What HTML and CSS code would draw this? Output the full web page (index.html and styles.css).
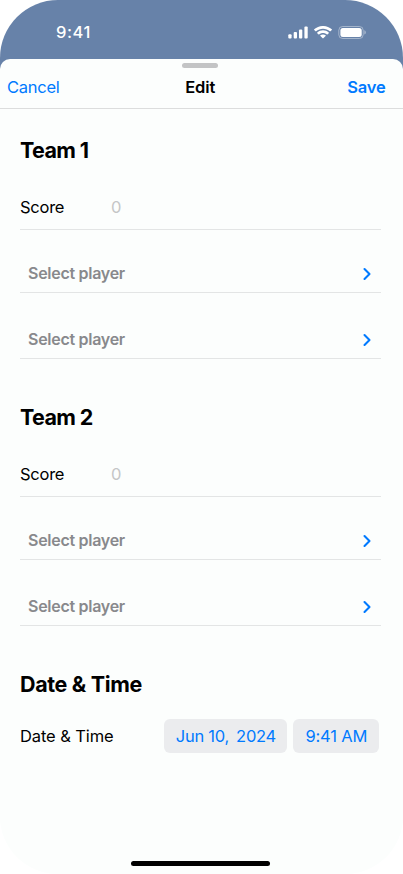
FILE: index.html
```html
<!DOCTYPE html>
<html lang="en">
<head>
<meta charset="utf-8">
<title>Edit</title>
<link rel="stylesheet" href="styles.css">
</head>
<body>
<div class="screen">
  <div class="status">
    <span class="clock">9:41</span>
    <div class="status-icons">
      <svg width="20" height="13" viewBox="0 0 20 13" fill="#fff"><rect x="0.300" y="8.2" width="3.3" height="4.4" rx="1"/><rect x="5.700" y="6" width="3.3" height="6.6" rx="1"/><rect x="11" y="3.4" width="3.3" height="9.2" rx="1"/><rect x="16.400" y="0.5" width="3.3" height="12.1" rx="1"/></svg>
      <svg width="18" height="13" viewBox="0 0 17.2 12.4" fill="#fff"><path d="M8.6 2.5c2.5 0 4.8.9 6.6 2.6.1.1.4.1.5 0l1.3-1.3c.2-.2.2-.4 0-.6C12.300-1.100 4.900-1.100.2 3.200c-.2.2-.2.4 0 .6l1.300 1.300c.1.1.4.1.5 0 1.800-1.700 4.100-2.600 6.600-2.600zM8.600 6.700c1.400 0 2.700.5 3.700 1.400.2.1.4.1.5 0l1.300-1.300c.2-.2.2-.4 0-.6-3.100-2.900-7.900-2.900-11 0-.2.2-.2.4 0 .6l1.300 1.300c.1.1.3.1.5 0 1-.9 2.300-1.400 3.700-1.400zM11.100 9.500c.2-.2.2-.4 0-.6-1.400-1.200-3.600-1.200-5 0-.2.2-.2.4 0 .6l2.200 2.200c.2.200.4.200.6 0z"/></svg>
      <svg width="28" height="13" viewBox="0 0 28 13"><rect x=".8" y=".5" width="24.4" height="12" rx="3.8" fill="none" stroke="#fff" stroke-opacity=".4"/><rect x="2.400" y="2" width="21.300" height="9" rx="2.500" fill="#fff"/><path d="M26.400 4.300v4.200c.8-.4 1.400-1.200 1.400-2.100S27.200 4.700 26.400 4.300z" fill="#fff" fill-opacity=".45"/></svg>
    </div>
  </div>
  <main class="sheet">
    <header class="nav">
      <div class="grabber"></div>
      <span class="cancel">Cancel</span>
      <h1>Edit</h1>
      <span class="save">Save</span>
    </header>
    <section class="team">
      <h2>Team 1</h2>
      <div class="score"><span class="label">Score</span><span class="value">0</span></div>
      <div class="player"><span>Select player</span><svg class="chevron" width="10" height="14" viewBox="0 0 10 14"><path d="M1.500 2 6.500 7 1.500 12"/></svg></div>
      <div class="player"><span>Select player</span><svg class="chevron" width="10" height="14" viewBox="0 0 10 14"><path d="M1.500 2 6.500 7 1.500 12"/></svg></div>
    </section>
    <section class="team">
      <h2>Team 2</h2>
      <div class="score"><span class="label">Score</span><span class="value">0</span></div>
      <div class="player"><span>Select player</span><svg class="chevron" width="10" height="14" viewBox="0 0 10 14"><path d="M1.500 2 6.500 7 1.500 12"/></svg></div>
      <div class="player"><span>Select player</span><svg class="chevron" width="10" height="14" viewBox="0 0 10 14"><path d="M1.500 2 6.500 7 1.500 12"/></svg></div>
    </section>
    <section class="when">
      <h2 class="when-title">Date &amp; Time</h2>
      <div class="when-row">
        <span class="when-label">Date &amp; Time</span>
        <span class="pill date"><span>Jun 10,</span><span>2024</span></span>
        <span class="pill time">9:41 AM</span>
      </div>
    </section>
    <div class="home"></div>
  </main>
</div>
</body>
</html>
```

FILE: styles.css
```css
* { box-sizing: border-box; }
body { margin: 0; background: #fff; font-family: Inter, "Liberation Sans", sans-serif; font-size: 16.5px; color: #000; }
svg { display: block; }
h1, h2 { margin: 0; }
.screen { width: 403px; height: 874px; border-radius: 58px; overflow: hidden; background: linear-gradient(#6782a9 80px, #fcfefd 80px); display: flex; flex-direction: column; }
.status { height: 59px; flex: none; display: flex; justify-content: space-between; padding: 22px 37px 0 56px; color: #fff; }
.clock { font-weight: 550; font-size: 16.5px; line-height: 20px; letter-spacing: 0.6px; }
.status-icons { display: flex; gap: 6px; padding-top: 4px; height: 17px; }
.sheet { flex: 1; background: #fcfefd; border-radius: 10px 10px 0 0; display: flex; flex-direction: column; }
.nav { position: relative; height: 50px; flex: none; border-bottom: 1px solid #dcdddd; display: grid; grid-template-columns: 1fr auto 1fr; align-items: center; padding: 6px 17.5px 0 7px; line-height: 22px; }
.grabber { position: absolute; top: 4px; left: 182px; width: 36px; height: 5px; border-radius: 3px; background: #c3c4c5; }
.cancel { color: #007aff; letter-spacing: -0.25px; }
.nav h1 { font-size: 16.5px; font-weight: 600; letter-spacing: -0.1px; margin-left: 8px; }
.save { color: #007aff; font-weight: 600; letter-spacing: -0.2px; text-align: right; }
.team { height: 267px; padding: 27px 22px 0 20px; }
h2 { font-size: 21.5px; font-weight: 700; line-height: 28px; letter-spacing: -0.65px; }
.when-title { letter-spacing: -0.35px; }
.score { display: flex; margin-top: 21px; height: 45px; padding-top: 11px; border-bottom: 1px solid #e3e5e5; line-height: 22px; letter-spacing: -0.25px; }
.label { width: 91px; }
.value { color: #c5c6c7; }
.player { display: flex; justify-content: space-between; height: 66px; padding: 38px 8px 0; border-bottom: 1px solid #e3e5e5; color: #88898c; font-size: 16px; font-weight: 580; line-height: 16px; letter-spacing: -0.28px; }
.score + .player { height: 63px; padding-top: 35px; }
.chevron { fill: none; stroke: #007aff; stroke-width: 2.1; stroke-linecap: round; stroke-linejoin: round; margin-top: 2px; }
.when { padding: 27px 23.6px 0 20px; }
.when-row { display: flex; align-items: center; margin-top: 21px; height: 34px; letter-spacing: -0.1px; }
.when-label { flex: 1; }
.pill { height: 34px; border-radius: 6px; background: #ebecee; color: #007aff; display: flex; align-items: center; justify-content: center; letter-spacing: -0.25px; }
.date { width: 123px; gap: 7px; margin-right: 6px; }
.time { width: 86px; letter-spacing: -0.15px; }
.home { width: 139px; height: 5px; border-radius: 3px; background: #000; margin: auto 0 8px 131px; }
```
